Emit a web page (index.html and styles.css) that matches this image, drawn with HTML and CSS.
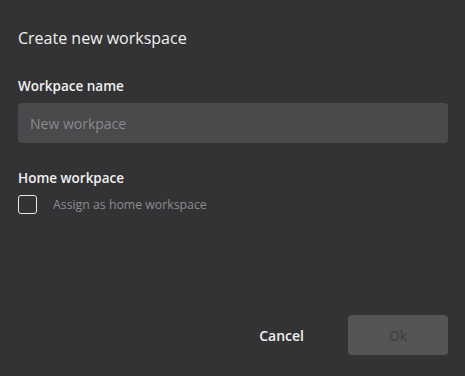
FILE: index.html
```html
<!DOCTYPE html>
<html lang="en">
<head>
    <meta charset="UTF-8">
    <title>Create new workspace</title>
    <link rel="stylesheet" href="styles.css">
</head>
<body>
    <div class="dialog">
        <h1 class="title">Create new workspace</h1>
        <div class="field">
            <label class="label" for="name">Workpace name</label>
            <input class="input" type="text" id="name" placeholder="New workpace">
        </div>
        <div class="field home">
            <span class="label">Home workpace</span>
            <label class="check">
                <span class="box"></span>
                <span class="check-text">Assign as home workspace</span>
            </label>
        </div>
        <div class="actions">
            <button class="btn cancel">Cancel</button>
            <button class="btn ok" disabled>Ok</button>
        </div>
    </div>
</body>
</html>
```

FILE: styles.css
```css
body {
    margin: 0;
    background-color: #333335;
    font-family: "Open Sans", "Noto Sans", sans-serif;
    color: #f0f0f0;
}
.dialog {
    width: 465px;
    height: 376px;
    box-sizing: border-box;
    padding: 27px 17px 21px 18px;
    display: flex;
    flex-direction: column;
}
.title {
    margin: 0;
    font-size: 16px;
    font-weight: 400;
    line-height: 22px;
}
.field {
    display: flex;
    flex-direction: column;
    margin-top: 28px;
}
.label {
    font-size: 13.5px;
    font-weight: 600;
    line-height: 18px;
    margin-bottom: 8px;
}
.input {
    height: 40px;
    box-sizing: border-box;
    border: none;
    border-radius: 4px;
    background-color: #4a494c;
    padding: 0 12px;
    font-family: inherit;
    font-size: 14px;
    color: #ddd;
    outline: none;
}
.input::placeholder {
    color: #8a898c;
}
.home {
    margin-top: 26px;
}
.home .label {
    margin-bottom: 8px;
}
.check {
    display: flex;
    align-items: center;
}
.box {
    width: 19px;
    height: 19px;
    box-sizing: border-box;
    border: 1.5px solid #e8e8e8;
    border-radius: 3px;
}
.check-text {
    margin-left: 16px;
    font-size: 12.3px;
    color: #8c8b8e;
}
.actions {
    margin-top: auto;
    display: flex;
    justify-content: flex-end;
    align-items: center;
    gap: 44px;
}
.btn {
    font-family: inherit;
    font-size: 14px;
    font-weight: 600;
    border: none;
    border-radius: 4px;
    height: 40px;
}
.cancel {
    background: none;
    color: #f0f0f0;
    padding: 0;
}
.ok {
    width: 100px;
    background-color: #555557;
    color: #3c3c3e;
    font-weight: 400;
}
```
